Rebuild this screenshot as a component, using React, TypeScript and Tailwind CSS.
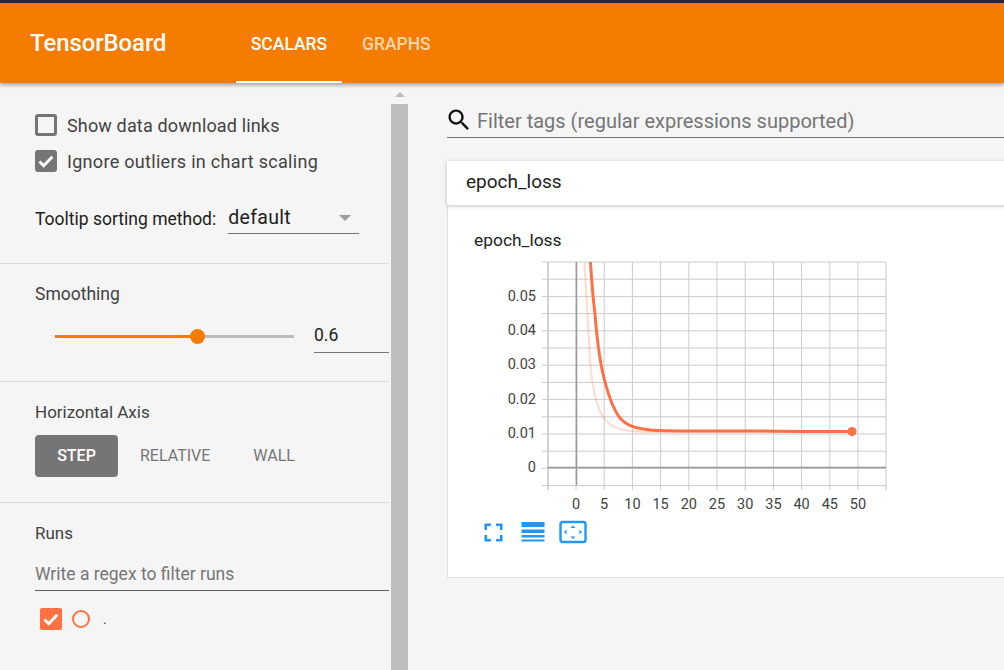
import React from "react";

const X_TICKS = [0, 5, 10, 15, 20, 25, 30, 35, 40, 45, 50];
const Y_LABELS = ["0.05", "0.04", "0.03", "0.02", "0.01", "0"];

const stepX = (step: number) => 576 + step * 5.64;
const rowY = (i: number) => 262 + i * 17.2;

const SMOOTHED =
  "M590.5 262 C591.5 280 593 298 595 314 C597 340 600 362 604 378 C608 394 613 409 620 418 C627 426 636 428.5 650 430 C665 431.2 680 431 700 431 L760 431 L800 431.5 L852 431.5";
const RAW =
  "M584.5 262 C586 290 588 325 590 360 C591.5 378 594 395 598 406 C602 418 609 425 617 428 C624 431 640 432 660 432 L852 432";

function ScalarChart() {
  return (
    <svg width="430" height="300" viewBox="490 250 430 300" className="block">
      {/* horizontal grid */}
      {Array.from({ length: 14 }).map((_, i) => (
        <line key={i} x1="542" x2="886" y1={rowY(i)} y2={rowY(i)} stroke="#cccaca" strokeWidth="1" />
      ))}
      {/* vertical grid */}
      {X_TICKS.map((t) => (
        <line key={t} x1={stepX(t)} x2={stepX(t)} y1="262" y2="490" stroke="#cccaca" strokeWidth="1" />
      ))}
      <line x1="886" x2="886" y1="262" y2="490" stroke="#d8d8d8" strokeWidth="1.5" />
      <line x1="548" x2="548" y1="262" y2="490" stroke="#c4c4c4" strokeWidth="1.5" />
      <line x1="548" x2="886" y1="467.5" y2="467.5" stroke="#999999" strokeWidth="1.5" />
      <line x1="576.5" x2="576.5" y1="262" y2="485" stroke="#999999" strokeWidth="1.5" />

      <path d={RAW} fill="none" stroke="#ff7043" strokeOpacity="0.25" strokeWidth="2" />
      <path d={SMOOTHED} fill="none" stroke="#ff7043" strokeWidth="3" strokeLinejoin="round" />
      <circle cx="852" cy="431.5" r="4.5" fill="#ff7043" />

      <g fontFamily="Roboto, sans-serif" fontSize="14.5" fill="#424242">
        {Y_LABELS.map((label, i) => (
          <text key={label} x="536" y={301 + i * 34.2} textAnchor="end">
            {label}
          </text>
        ))}
        {X_TICKS.map((t) => (
          <text key={t} x={stepX(t)} y="509" textAnchor="middle">
            {t}
          </text>
        ))}
      </g>
    </svg>
  );
}

function ChartToolbar() {
  return (
    <div className="flex items-center ml-[30px] -mt-[30px] h-6 text-[#2196f3]">
      <svg width="31" height="31" viewBox="0 0 24 24" fill="currentColor">
        <path d="M7 14H5v5h5v-2H7v-3zm-2-4h2V7h3V5H5v5zm12 7h-3v2h5v-5h-2v3zM14 5v2h3v3h2V5h-5z" />
      </svg>
      <svg width="24" height="22" viewBox="0 0 24 22" fill="currentColor" className="ml-[12px]">
        <rect x="0.5" y="1" width="23" height="5" />
        <rect x="0.5" y="8.5" width="23" height="3.5" />
        <rect x="0.5" y="14" width="23" height="2.5" />
        <rect x="0.5" y="18.5" width="23" height="2" />
      </svg>
      <svg width="28" height="24" viewBox="0 0 28 24" fill="currentColor" className="ml-[14px]">
        <rect x="1.5" y="2" width="25" height="20" rx="2" fill="none" stroke="currentColor" strokeWidth="2.4" />
        <path d="M14 5.5l2.5 2.5h-5zM14 19l-2.5-2.5h5zM5 12l2.5-2.5v5zM23 12l-2.5 2.5v-5z" />
      </svg>
    </div>
  );
}

function CheckMark() {
  return (
    <svg width="18" height="18" viewBox="0 0 18 18" fill="none" stroke="white" strokeWidth="3">
      <path d="M2.5 9.5l4.2 4.2 8.6-9" />
    </svg>
  );
}

function Sidebar() {
  return (
    <aside className="w-[389px] shrink-0 text-[#424242]">
      <section className="h-[181px] border-b border-[#dcdcdc] pl-[35px] pt-[31px]">
        <label className="flex items-center h-[22px] gap-[10px] text-[18px] tracking-[0.15px]">
          <span className="w-[22px] h-[22px] rounded-[3px] border-[3px] border-[#757575]" />
          Show data download links
        </label>
        <label className="flex items-center h-[22px] gap-[10px] mt-[14px] text-[18px] tracking-[0.3px]">
          <span className="w-[22px] h-[22px] rounded-[3px] bg-[#757575] flex items-center justify-center">
            <CheckMark />
          </span>
          Ignore outliers in chart scaling
        </label>
        <div className="flex items-end mt-[26px] h-[36px]">
          <span className="text-[#212121] text-[17.5px] leading-[26px] pb-[2px]">Tooltip sorting method:</span>
          <div className="ml-[12px] w-[131px] h-[36px] border-b border-[#757575] flex items-center justify-between pr-[8px] pt-[4px]">
            <span className="text-[19.5px] tracking-[0.3px] text-[#212121]">default</span>
            <span className="w-0 h-0 border-x-[6px] border-x-transparent border-t-[6px] border-t-[#9e9e9e]" />
          </div>
        </div>
      </section>

      <section className="h-[118px] border-b border-[#dcdcdc] pl-[35px] pt-[18px]">
        <h3 className="text-[17.5px] leading-[24px]">Smoothing</h3>
        <div className="flex items-start mt-[11px]">
          <div className="relative ml-[20px] mt-[18px] w-[239px] h-[3px] bg-[#bdbdbd]">
            <div className="h-full w-[143px] bg-[#f57c00]" />
            <div className="absolute left-[135px] -top-[6px] w-[15px] h-[15px] rounded-full bg-[#f57c00]" />
          </div>
          <div className="ml-[20px] w-[75px] h-[36px] border-b border-[#757575] text-[17.5px] leading-[36px] text-[#212121]">0.6</div>
        </div>
      </section>

      <section className="h-[121px] border-b border-[#dcdcdc] pl-[35px] pt-[18px]">
        <h3 className="text-[17px] leading-[24px]">Horizontal Axis</h3>
        <div className="flex items-center mt-[11px] text-[16px] font-medium">
          <button className="w-[83px] h-[42px] rounded-[4px] bg-[#757575] text-white">STEP</button>
          <span className="ml-[22px] text-[#757575] font-normal">RELATIVE</span>
          <span className="ml-[43px] text-[#757575] font-normal">WALL</span>
        </div>
      </section>

      <section className="pl-[35px] pt-[18px]">
        <h3 className="text-[17px] leading-[24px]">Runs</h3>
        <div className="mt-[15px] h-[31px] border-b border-[#616161] text-[17.5px] leading-[28px] text-[#757575]">
          Write a regex to filter runs
        </div>
        <div className="flex items-center ml-[5px] mt-[17px] h-[22px]">
          <span className="w-[22px] h-[22px] rounded-[2px] bg-[#ff7043] flex items-center justify-center">
            <CheckMark />
          </span>
          <span className="ml-[10px] w-[18px] h-[18px] rounded-full border-2 border-[#ff7043]" />
          <span className="ml-[13px] text-[14px] leading-none">.</span>
        </div>
      </section>
    </aside>
  );
}

export default function App() {
  return (
    <div className="h-screen flex flex-col overflow-hidden bg-[#f5f5f5] font-['Roboto',sans-serif]">
      <div className="h-[3px] shrink-0 bg-[#1f2a3c]" />
      <header className="relative z-10 h-[80px] shrink-0 flex bg-[#f57c00] text-white shadow-[0_2px_4px_rgba(0,0,0,0.35)]">
        <div className="ml-[30px] w-[206px] pt-[25px] text-[23.8px] leading-[30px] font-medium">TensorBoard</div>
        <nav className="flex text-[17.5px] font-medium">
          <div className="w-[106px] text-center pt-[31px] leading-5 border-b-2 border-white">SCALARS</div>
          <div className="ml-[20px] pt-[31px] leading-5 text-white/70">GRAPHS</div>
        </nav>
      </header>

      <div className="flex flex-1 min-h-0">
        <Sidebar />
        <div className="ml-[2px] w-[17px] shrink-0 flex flex-col items-center bg-[#f5f5f5]">
          <div className="h-[21px] w-full flex justify-center pt-[9px]">
            <span className="w-0 h-0 border-x-[5px] border-x-transparent border-b-[5px] border-b-[#bdbdbd]" />
          </div>
          <div className="flex-1 w-full bg-[#bdbdbd]" />
        </div>

        <main className="pl-[39px] flex-1 min-w-0">
          <div className="mt-[21px] h-[34px] flex items-center border-b border-[#757575] w-[620px] pb-[1px]">
            <svg width="28" height="28" viewBox="0 0 24 24" fill="#111" className="-ml-[2px] mr-[4px] shrink-0">
              <path d="M15.5 14h-.79l-.28-.27C15.41 12.59 16 11.11 16 9.5 16 5.91 13.09 3 9.5 3S3 5.91 3 9.5 5.91 16 9.5 16c1.61 0 3.09-.59 4.23-1.57l.27.28v.79l5 4.99L20.49 19l-4.99-5zm-6 0C7.01 14 5 11.99 5 9.5S7.01 5 9.5 5 14 7.01 14 9.5 11.99 14 9.5 14z" />
            </svg>
            <span className="text-[20px] text-[#757575] mt-[2px]">Filter tags (regular expressions supported)</span>
          </div>

          <div className="w-[620px] mt-[23px] h-[44px] flex items-center pl-[19px] pb-[2px] bg-white shadow-[0_1px_4px_rgba(0,0,0,0.25)] text-[19px] text-[#212121] relative z-[1]">
            epoch_loss
          </div>
          <div className="w-[620px] h-[373px] bg-white border-l border-b border-[#e0e0e0]">
            <div className="pl-[26px] pt-[25px] text-[17.4px] leading-5 text-[#212121]">epoch_loss</div>
            <div className="ml-[42px]">
              <ScalarChart />
            </div>
            <ChartToolbar />
          </div>
        </main>
      </div>
    </div>
  );
}
